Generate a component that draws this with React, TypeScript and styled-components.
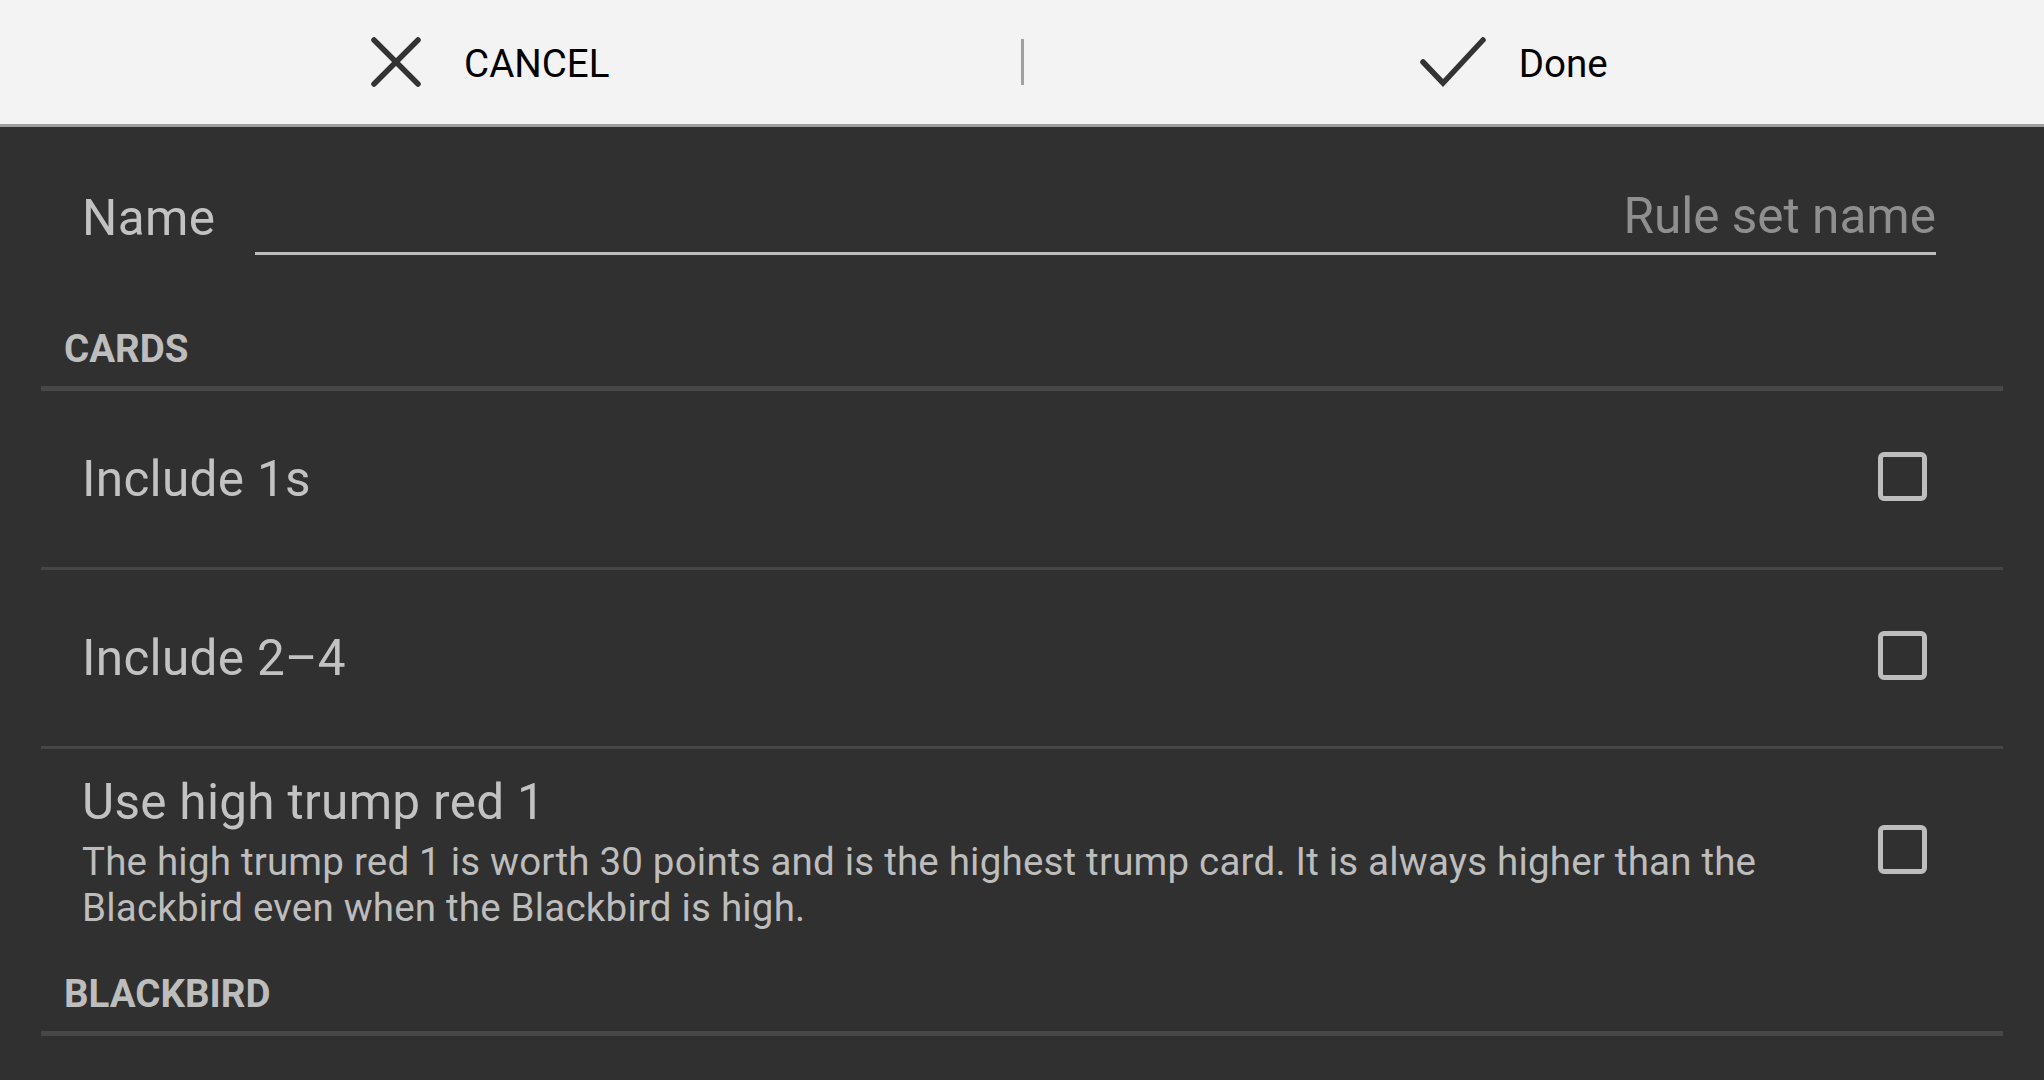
import React from 'react';
import styled, { createGlobalStyle } from 'styled-components';

// Rule set editor

const GlobalStyle = createGlobalStyle`
  html, body {
    margin: 0;
    padding: 0;
    background: #303030;
    font-family: Roboto, "Noto Sans", "Liberation Sans", sans-serif;
  }
`;

const Page = styled.div`
  width: 2044px;
  height: 1080px;
  overflow: hidden;
  background: #303030;
`;

const TopBar = styled.div`
  height: 124px;
  background: #f3f3f3;
  border-bottom: 3px solid #9e9e9e;
  display: flex;
  align-items: center;
`;

const BarButton = styled.div`
  flex: 1;
  display: flex;
  align-items: center;
  justify-content: center;
  padding-right: 40px;
  box-sizing: border-box;
  height: 100%;
`;

const BarLabel = styled.span<{ $gap: number }>`
  margin-left: ${(p) => p.$gap}px;
  margin-top: 3px;
  font-size: 38.5px;
  color: #000;
`;

const BarDivider = styled.div`
  width: 3px;
  height: 46px;
  background: #a0a0a0;
`;

const Content = styled.div`
  padding: 0 41px;
`;

const NameRow = styled.div`
  display: flex;
  align-items: flex-start;
  margin: 60px 0 71px;
  padding-left: 41px;
`;

const NameLabel = styled.label`
  font-size: 49.5px;
  line-height: 58px;
  letter-spacing: 0.4px;
  padding-top: 2px;
  color: #c2c2c2;
`;

const NameInput = styled.input`
  flex: 1;
  margin: 0 67px 0 39px;
  height: 58px;
  padding: 0 0 7px;
  border: none;
  border-bottom: 3px solid #bdbdbd;
  background: transparent;
  outline: none;
  font-family: inherit;
  font-size: 49.5px;
  line-height: 58px;
  text-align: right;
  color: #c2c2c2;
  box-sizing: content-box;

  &::placeholder {
    color: #8f8f8f;
  }
`;

const SectionHeader = styled.div`
  margin-top: 16px;
  padding: 0 0 15px 23px;
  border-bottom: 5px solid #474747;
  font-size: 38.5px;
  line-height: 45px;
  font-weight: 700;
  color: #bdbdbd;
`;

const Row = styled.div<{ $last?: boolean }>`
  display: flex;
  align-items: center;
  min-height: 179px;
  padding: 24px 76px 24px 41px;
  box-sizing: border-box;
  border-bottom: ${(p) => (p.$last ? 'none' : '3px solid #464646')};
`;

const RowText = styled.div`
  flex: 1;
  padding-right: 100px;
`;

const RowTitle = styled.div`
  font-size: 49.5px;
  line-height: 58px;
  letter-spacing: 0.3px;
  color: #c2c2c2;
`;

const RowDescription = styled.div`
  margin-top: 8px;
  font-size: 38.5px;
  line-height: 46px;
  letter-spacing: 0.2px;
  color: #bdbdbd;
`;

const CheckBox = styled.span`
  width: 49px;
  height: 49px;
  margin-top: -5px;
  box-sizing: border-box;
  border: 5px solid #bdbdbd;
  border-radius: 6px;
  flex-shrink: 0;
`;

const CloseIcon = () => (
  <svg width="50" height="50" viewBox="0 0 50 50">
    <g stroke="#333" strokeWidth="5.5" strokeLinecap="round">
      <line x1="3" y1="3" x2="47" y2="47" />
      <line x1="47" y1="3" x2="3" y2="47" />
    </g>
  </svg>
);

const CheckIcon = () => (
  <svg width="66" height="50" viewBox="0 0 66 50">
    <polyline
      points="3,25 23,46 63,3"
      fill="none"
      stroke="#333"
      strokeWidth="5.5"
      strokeLinecap="round"
      strokeLinejoin="miter"
    />
  </svg>
);

interface Rule {
  title: string;
  description?: string;
}

const cardRules: Rule[] = [
  { title: 'Include 1s' },
  { title: 'Include 2–4' },
  {
    title: 'Use high trump red 1',
    description:
      'The high trump red 1 is worth 30 points and is the highest trump card. It is always higher than the Blackbird even when the Blackbird is high.',
  },
];

const App: React.FC = () => {
  return (
    <Page>
      <GlobalStyle />
      <TopBar>
        <BarButton>
          <CloseIcon />
          <BarLabel $gap={43}>CANCEL</BarLabel>
        </BarButton>
        <BarDivider />
        <BarButton>
          <CheckIcon />
          <BarLabel $gap={33}>Done</BarLabel>
        </BarButton>
      </TopBar>
      <Content>
        <NameRow>
          <NameLabel>Name</NameLabel>
          <NameInput placeholder="Rule set name" />
        </NameRow>
        <SectionHeader>CARDS</SectionHeader>
        {cardRules.map((rule, i) => (
          <Row key={rule.title} $last={i === cardRules.length - 1}>
            <RowText>
              <RowTitle>{rule.title}</RowTitle>
              {rule.description && <RowDescription>{rule.description}</RowDescription>}
            </RowText>
            <CheckBox />
          </Row>
        ))}
        <SectionHeader>BLACKBIRD</SectionHeader>
      </Content>
    </Page>
  );
};

export default App;
